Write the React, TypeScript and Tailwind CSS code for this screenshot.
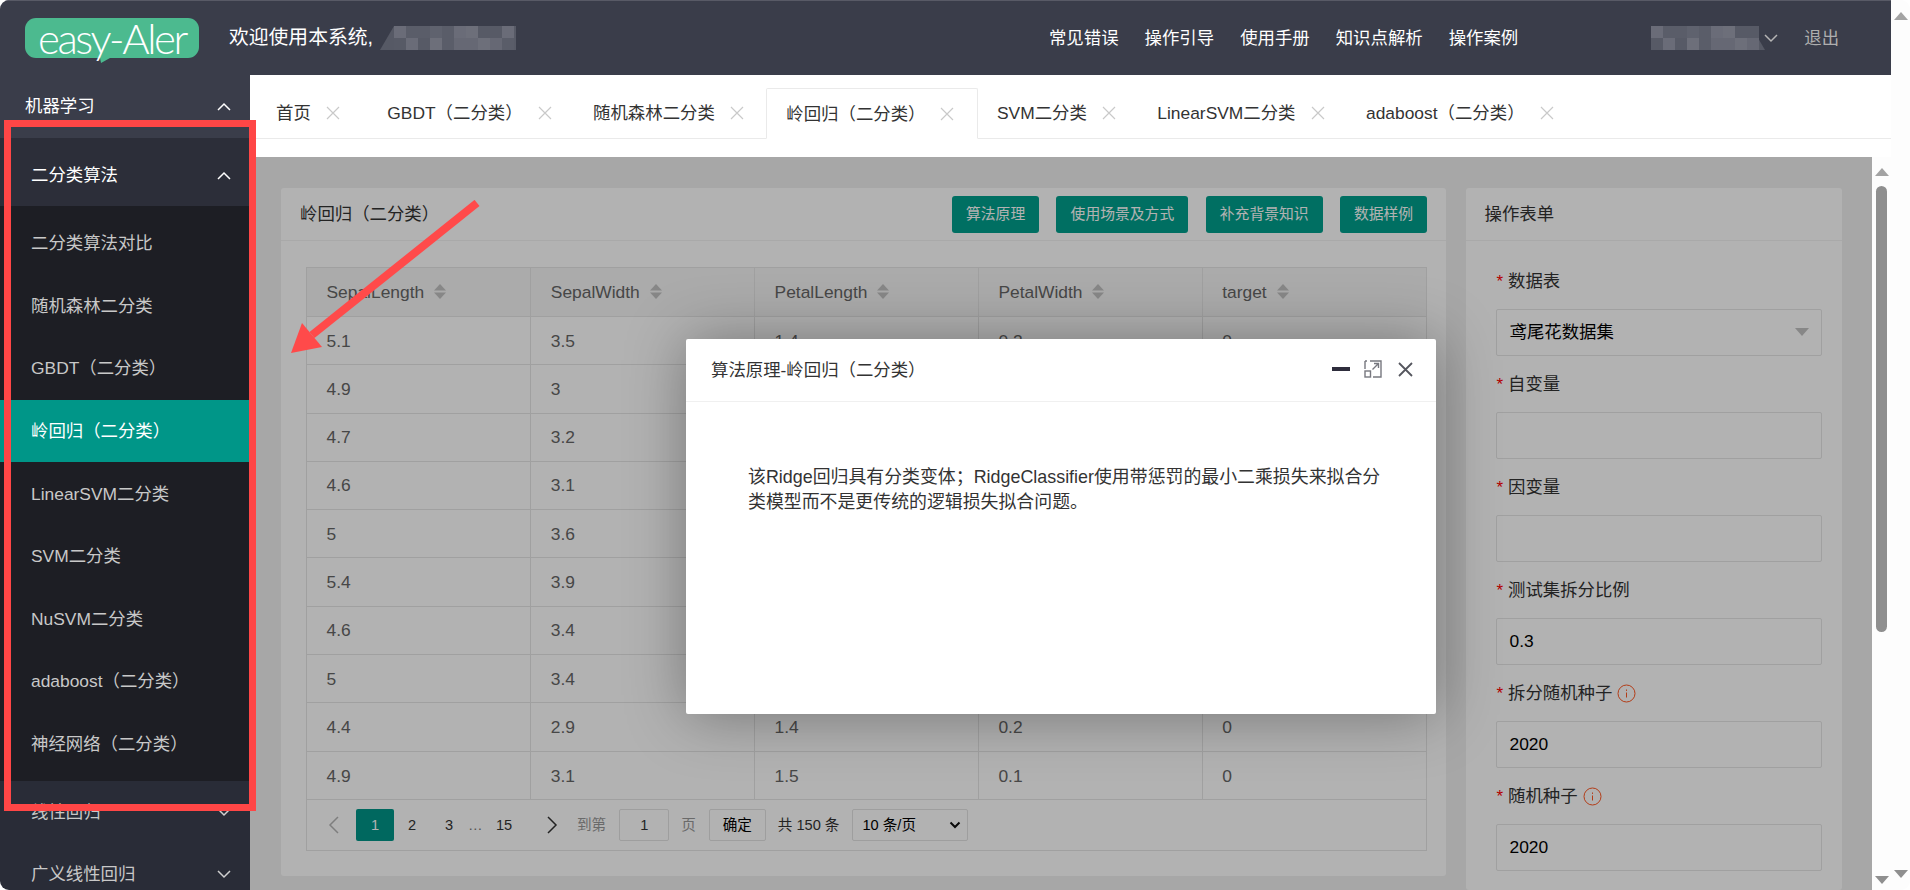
import React from "react";

const CN = "岭回归（二分类）";
const sideItems = [
  "二分类算法对比",
  "随机森林二分类",
  "GBDT（二分类）",
  CN,
  "LinearSVM二分类",
  "SVM二分类",
  "NuSVM二分类",
  "adaboost（二分类）",
  "神经网络（二分类）",
];
const tabs: { t: string; active?: boolean; mr?: boolean }[] = [
  { t: "首页", mr: true },
  { t: "GBDT（二分类）" },
  { t: "随机森林二分类" },
  { t: CN, active: true },
  { t: "SVM二分类" },
  { t: "LinearSVM二分类" },
  { t: "adaboost（二分类）" },
];
const cols = ["SepalLength", "SepalWidth", "PetalLength", "PetalWidth", "target"];
const rows = [
  ["5.1", "3.5", "1.4", "0.2", "0"],
  ["4.9", "3", "1.4", "0.2", "0"],
  ["4.7", "3.2", "1.3", "0.2", "0"],
  ["4.6", "3.1", "1.5", "0.2", "0"],
  ["5", "3.6", "1.4", "0.2", "0"],
  ["5.4", "3.9", "1.7", "0.4", "0"],
  ["4.6", "3.4", "1.4", "0.3", "0"],
  ["5", "3.4", "1.5", "0.2", "0"],
  ["4.4", "2.9", "1.4", "0.2", "0"],
  ["4.9", "3.1", "1.5", "0.1", "0"],
];
const form: { label: string; value?: string; info?: boolean; select?: boolean }[] = [
  { label: "数据表", value: "鸢尾花数据集", select: true },
  { label: "自变量" },
  { label: "因变量" },
  { label: "测试集拆分比例", value: "0.3" },
  { label: "拆分随机种子", value: "2020", info: true },
  { label: "随机种子", value: "2020", info: true },
];

function Chevron({ up, className = "" }: { up?: boolean; className?: string }) {
  return (
    <svg width="14" height="9" viewBox="0 0 14 9" className={className} fill="none" stroke="currentColor" strokeWidth="1.5">
      <path d={up ? "M1 8 L7 2 L13 8" : "M1 1 L7 7 L13 1"} />
    </svg>
  );
}

function Close({ className = "" }: { className?: string }) {
  return (
    <svg width="14" height="14" viewBox="0 0 14 14" className={className} fill="none" stroke="currentColor" strokeWidth="1.2">
      <path d="M1 1 L13 13 M13 1 L1 13" />
    </svg>
  );
}

function Sort() {
  return (
    <svg width="12" height="16" viewBox="0 0 12 16" className="ml-[10px] shrink-0">
      <path d="M6 0 L12 6.5 L0 6.5 Z" fill="#c2c2c2" />
      <path d="M6 15 L12 8.5 L0 8.5 Z" fill="#c2c2c2" />
    </svg>
  );
}

function Info() {
  return (
    <svg width="19" height="19" viewBox="0 0 19 19" className="ml-[5px] shrink-0" fill="none" stroke="#ff5722">
      <circle cx="9.5" cy="9.5" r="8.5" strokeWidth="1" />
      <path d="M9.5 5.5 v1.4 M9.5 8.5 v5" strokeWidth="1" />
    </svg>
  );
}

function Mosaic({ w, tail }: { w: number; tail: "left" | "right" }) {
  const shades = ["#5f626e", "#666874", "#5a5d69", "#6a6c78", "#63656f", "#575a66", "#6d6f7a"];
  const cells: React.ReactNode[] = [];
  let k = 0;
  for (let y = 0; y < 24; y += 12) {
    for (let x = tail === "left" ? 14 : 0; x < (tail === "left" ? w : w - 14); x += 12) {
      k = (k * 5 + x + y + 3) % shades.length;
      cells.push(<rect key={`${x}-${y}`} x={x} y={y} width="12" height="12" fill={shades[k]} />);
    }
  }
  return (
    <svg width={w} height="24" viewBox={`0 0 ${w} 24`} className="shrink-0">
      {tail === "left" ? (
        <path d="M14 0 L14 24 L0 24 Z" fill="#565965" />
      ) : (
        <path d={`M${w - 14} 0 L${w} 24 L${w - 14} 24 Z`} fill="#565965" />
      )}
      {cells}
    </svg>
  );
}

function Header() {
  return (
    <header className="flex h-[75px] shrink-0 items-center border-t border-[#585a66] bg-[#3a3d4a] pl-[25px] text-[17.4px] text-white">
      <div className="relative flex h-[40px] w-[174px] shrink-0 items-center justify-center rounded-[11px] bg-[#4cba8f]">
        <span className="font-['Lato','Noto_Sans',sans-serif] text-[42px] leading-none font-light tracking-[-2.4px] text-white">easy-Aler</span>
        <svg width="10" height="5" viewBox="0 0 10 5" className="absolute top-[40px] left-[75px]">
          <path d="M0 0 L10 0 L1 5 Z" fill="#4cba8f" />
        </svg>
      </div>
      <span className="ml-[30px] text-[19.8px] whitespace-nowrap">欢迎使用本系统,</span>
      <div className="ml-[7px]">
        <Mosaic w={136} tail="left" />
      </div>
      <nav className="ml-[533px] flex gap-[26px] whitespace-nowrap">
        <span>常见错误</span>
        <span>操作引导</span>
        <span>使用手册</span>
        <span>知识点解析</span>
        <span>操作案例</span>
      </nav>
      <div className="ml-[133px]">
        <Mosaic w={114} tail="right" />
      </div>
      <Chevron className="-ml-[1px] text-[#b5b5b5]" />
      <span className="ml-[26px] text-[#aeaeae]">退出</span>
    </header>
  );
}

function Sidebar() {
  return (
    <aside className="flex h-[815px] w-[250px] shrink-0 flex-col overflow-hidden bg-[#292c37] text-[17.4px]">
      <div className="flex h-[63px] shrink-0 items-center justify-between bg-[#3a3d4a] pr-[19px] pl-[25px] text-white">
        <span>机器学习</span>
        <Chevron up />
      </div>
      <div className="flex h-[68px] shrink-0 items-center justify-between bg-[#2c2e39] pt-[6px] pr-[19px] pl-[31px] text-white">
        <span>二分类算法</span>
        <Chevron up />
      </div>
      <div className="shrink-0 bg-[#1d1e24] py-[6px]">
        {sideItems.map((s, i) => (
          <div key={s} className={`flex h-[62.6px] items-center pl-[31px] whitespace-nowrap ${i === 3 ? "bg-[#009688] text-white" : "text-[#c8c8c8]"}`}>
            {s}
          </div>
        ))}
      </div>
      {["线性回归", "广义线性回归"].map((s) => (
        <div key={s} className="flex h-[62px] shrink-0 items-center justify-between pr-[19px] pl-[31px] text-[#c8c8c8]">
          <span>{s}</span>
          <Chevron className="text-[#d0d0d0]" />
        </div>
      ))}
    </aside>
  );
}

function Tabs() {
  return (
    <div className="h-[82px] shrink-0 bg-white pt-[13px]">
      <div className="flex h-[51px] items-stretch border-b border-[#eaeaea] pl-[7px] text-[17.4px] whitespace-nowrap text-[#333]">
        {tabs.map((t) => (
          <div
            key={t.t}
            className={`flex items-center pr-[22.5px] pl-[19px] ${t.mr ? "mr-[6px]" : ""} ${
              t.active ? "-mb-px rounded-t-[2px] border border-b-white border-[#eaeaea] pl-[18px] pr-[21.5px]" : ""
            }`}
          >
            <span className="pt-[1px]">{t.t}</span>
            <Close className="ml-[15px] text-[#c9c9c9]" />
          </div>
        ))}
      </div>
    </div>
  );
}

function Pagination() {
  return (
    <div className="flex h-[50px] items-center text-[14.6px] whitespace-nowrap text-[#333]">
      <svg width="12" height="18" viewBox="0 0 12 18" className="ml-[21px]" fill="none" stroke="#b5b5b5" strokeWidth="1.5">
        <path d="M10 1 L2 9 L10 17" />
      </svg>
      <div className="ml-[16px] flex h-[32px] w-[38px] items-center justify-center rounded-[2px] bg-[#009688] text-white">1</div>
      <span className="w-[36px] text-center">2</span>
      <span className="w-[38px] text-center">3</span>
      <span className="w-[12px] text-center text-[#777]">…</span>
      <span className="ml-[4px] w-[40px] text-center">15</span>
      <svg width="12" height="18" viewBox="0 0 12 18" className="ml-[22px]" fill="none" stroke="#333" strokeWidth="1.5">
        <path d="M2 1 L10 9 L2 17" />
      </svg>
      <span className="ml-[19px] text-[#999]">到第</span>
      <div className="ml-[13px] flex h-[32px] w-[50px] items-center justify-center rounded-[2px] border border-[#e2e2e2]">1</div>
      <span className="ml-[12px] text-[#999]">页</span>
      <div className="ml-[13px] flex h-[32px] w-[57px] items-center justify-center rounded-[2px] border border-[#e2e2e2] text-black">确定</div>
      <span className="ml-[12px]">共 150 条</span>
      <div className="ml-[13px] flex h-[32px] w-[116px] items-center justify-between rounded-[2px] border border-[#e2e2e2] pr-[6px] pl-[9px] text-black">
        <span>10 条/页</span>
        <svg width="12" height="8" viewBox="0 0 12 8" fill="none" stroke="#111" strokeWidth="2">
          <path d="M1.5 1.5 L6 6 L10.5 1.5" />
        </svg>
      </div>
    </div>
  );
}

function LeftCard() {
  return (
    <section className="h-[688px] w-[1165px] shrink-0 rounded-[3px] bg-white">
      <div className="flex h-[53px] items-center justify-between border-b border-[#f2f2f2] pr-[19px] pl-[19px] text-[17.4px] text-[#333]">
        <span className="pt-[1px]">{CN}</span>
        <div className="flex gap-[17.3px] text-[14.8px] whitespace-nowrap text-white">
          <span className="flex h-[37px] w-[87px] items-center justify-center rounded-[3px] bg-[#009f8d]">算法原理</span>
          <span className="flex h-[37px] w-[132px] items-center justify-center rounded-[3px] bg-[#009f8d]">使用场景及方式</span>
          <span className="flex h-[37px] w-[117px] items-center justify-center rounded-[3px] bg-[#009f8d]">补充背景知识</span>
          <span className="flex h-[37px] w-[87px] items-center justify-center rounded-[3px] bg-[#009f8d]">数据样例</span>
        </div>
      </div>
      <div className="mt-[26px] mr-[19px] ml-[25px] border border-[#e6e6e6]">
        <table className="w-full table-fixed border-collapse text-[17.4px] text-[#666]">
          <thead>
            <tr className="h-[48.5px] bg-[#f5f5f5]">
              {cols.map((c, i) => (
                <th key={c} className={`pl-[19.5px] text-left font-normal ${i < 4 ? "border-r border-[#e6e6e6]" : ""}`}>
                  <span className="flex items-center">
                    {c}
                    <Sort />
                  </span>
                </th>
              ))}
            </tr>
          </thead>
          <tbody>
            {rows.map((r, i) => (
              <tr key={i} className="h-[48.3px] border-t border-[#e6e6e6]">
                {r.map((v, j) => (
                  <td key={j} className={`pl-[19.5px] ${j < 4 ? "border-r border-[#e6e6e6]" : ""}`}>
                    {v}
                  </td>
                ))}
              </tr>
            ))}
          </tbody>
        </table>
        <div className="border-t border-[#e6e6e6]">
          <Pagination />
        </div>
      </div>
    </section>
  );
}

function RightCard() {
  return (
    <section className="ml-[19.5px] w-[376px] shrink-0 rounded-[3px] bg-white">
      <div className="flex h-[53px] items-center border-b border-[#f2f2f2] pl-[19px] text-[17.4px] text-[#333]">
        <span className="pt-[1px]">操作表单</span>
      </div>
      <div className="pt-[12px] pr-[20px] pl-[30px] text-[17.4px]">
        {form.map((f) => (
          <div key={f.label} className="h-[103px]">
            <div className="flex h-[56px] items-center pt-[1px] text-[#333]">
              <span className="w-[12.5px] pl-[1px] text-[17px] leading-none text-[#ff0000]">*</span>
              <span>{f.label}</span>
              {f.info && <Info />}
            </div>
            <div className="relative flex h-[47px] items-center rounded-[2px] border border-[#e6e6e6] pl-[13px] text-black">
              {f.value}
              {f.select && (
                <svg width="14" height="8" viewBox="0 0 14 8" className="absolute top-[18px] right-[12px]">
                  <path d="M0 0 L14 0 L7 8 Z" fill="#c2c2c2" />
                </svg>
              )}
            </div>
          </div>
        ))}
        <div className="flex h-[56px] items-center">
          <span className="ml-[73px]">
            <Info />
          </span>
        </div>
      </div>
    </section>
  );
}

function Modal() {
  return (
    <div className="absolute top-[182px] left-[436px] flex h-[375px] w-[750px] flex-col rounded-[2px] bg-white shadow-[1px_1px_60px_rgba(0,0,0,0.35)]">
      <div className="relative flex h-[63px] shrink-0 items-center border-b border-[#f0f0f0] pl-[25px] text-[17.4px] text-[#333]">
        <span className="pt-[1px]">算法原理-{CN}</span>
        <div className="absolute top-[21px] right-[23px] flex items-center">
          <span className="mr-[14px] h-[3.5px] w-[18px] bg-[#2e2d3c]" />
          <svg width="18" height="18" viewBox="0 0 18 18" className="mr-[16px]" fill="none" stroke="#77787f" strokeWidth="1.4">
            <path d="M6 1 H17 V17 H9 M1 1 H3 M1 1 V9" />
            <rect x="1" y="11" width="5.5" height="6" />
            <path d="M8.5 9.5 L14.5 3.5 M10 3.5 H14.5 V8" />
          </svg>
          <svg width="15" height="15" viewBox="0 0 15 15" fill="none" stroke="#55565e" strokeWidth="1.8">
            <path d="M1 1 L14 14 M14 1 L1 14" />
          </svg>
        </div>
      </div>
      <div className="pt-[63px] pl-[62px] text-[17.9px] leading-[25px] whitespace-nowrap text-[#333]">
        该Ridge回归具有分类变体；RidgeClassifier使用带惩罚的最小二乘损失来拟合分
        <br />
        类模型而不是更传统的逻辑损失拟合问题。
      </div>
    </div>
  );
}

function Scrollbar({ outer }: { outer?: boolean }) {
  return (
    <div className="relative w-full flex-1 bg-[#fdfdfd]">
      <svg width="14" height="8" viewBox="0 0 14 8" className={`absolute left-[3px] ${outer ? "top-[12px]" : "top-[11px]"}`}>
        <path d="M7 0 L14 8 L0 8 Z" fill="#a3a3a3" />
      </svg>
      {!outer && <div className="absolute top-[29px] left-[4px] h-[446px] w-[11px] rounded-full bg-[#8f8f8f]" />}
      <svg width="14" height="8" viewBox="0 0 14 8" className={`absolute left-[3px] ${outer ? "bottom-[12px]" : "bottom-[6px]"}`}>
        <path d="M0 0 L14 0 L7 8 Z" fill="#8f8f8f" />
      </svg>
    </div>
  );
}

export default function App() {
  return (
    <div className="relative flex h-[890px] w-[1910px] overflow-hidden rounded-[9px] bg-white font-['Liberation_Sans','Noto_Sans_CJK_SC',sans-serif]">
      <div className="flex h-full w-[1891px] shrink-0 flex-col">
        <Header />
        <div className="flex min-h-0 flex-1">
          <Sidebar />
          <main className="flex min-w-0 flex-1 flex-col">
            <Tabs />
            <div className="flex min-h-0 flex-1">
              <div className="relative flex h-[733px] w-[1622px] shrink-0 overflow-hidden bg-[#f0f0f0] pt-[31px] pl-[31px]">
                <LeftCard />
                <RightCard />
                <div className="absolute inset-0 bg-black/30" />
                <Modal />
              </div>
              <div className="flex flex-1 flex-col">
                <Scrollbar />
              </div>
            </div>
          </main>
        </div>
      </div>
      <div className="flex w-[19px] shrink-0 flex-col">
        <Scrollbar outer />
      </div>

      <div className="pointer-events-none absolute top-[119.5px] left-[4px] h-[691px] w-[251.5px] border-[7.5px] border-[#ff4646]" />
      <svg width="200" height="160" viewBox="0 0 200 160" className="pointer-events-none absolute top-[200px] left-[285px]">
        <path d="M192 3 L27 135" stroke="#ff4a4a" strokeWidth="8" fill="none" />
        <path d="M6 153 L17 123 L37 147 Z" fill="#ff4a4a" />
      </svg>
    </div>
  );
}
